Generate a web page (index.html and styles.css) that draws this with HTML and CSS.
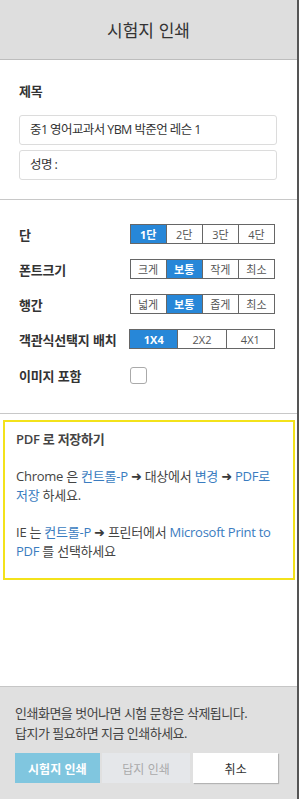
FILE: index.html
```html
<!DOCTYPE html>
<html lang="ko">
<head>
<meta charset="utf-8">
<link rel="stylesheet" href="styles.css">
</head>
<body>
<div class="panel">
  <header class="head">시험지 인쇄</header>
  <section class="sec-title">
    <div class="label">제목</div>
    <div class="input">중1 영어교과서 YBM 박준언 레슨 1</div>
    <div class="input">성명 :</div>
  </section>
  <section class="sec-opts">
    <div class="row">
      <div class="label">단</div>
      <div class="seg seg4"><span class="on">1단</span><span>2단</span><span>3단</span><span>4단</span></div>
    </div>
    <div class="row">
      <div class="label">폰트크기</div>
      <div class="seg seg4"><span>크게</span><span class="on">보통</span><span>작게</span><span>최소</span></div>
    </div>
    <div class="row">
      <div class="label">행간</div>
      <div class="seg seg4"><span>넓게</span><span class="on">보통</span><span>좁게</span><span>최소</span></div>
    </div>
    <div class="row">
      <div class="label">객관식선택지 배치</div>
      <div class="seg seg3"><span class="on">1X4</span><span>2X2</span><span>4X1</span></div>
    </div>
    <div class="row row-check">
      <div class="label">이미지 포함</div>
      <div class="check"></div>
    </div>
  </section>
  <section class="pdf">
    <div class="pdf-title">PDF 로 저장하기</div>
    <p>Chrome 은 <span class="hl">컨트롤-P</span> <span class="arr">➜</span> 대상에서 <span class="hl">변경</span> <span class="arr">➜</span> <span class="hl">PDF로 저장</span> 하세요.</p>
    <p>IE 는 <span class="hl">컨트롤-P</span> <span class="arr">➜</span> 프린터에서 <span class="hl">Microsoft Print to PDF</span> 를 선택하세요</p>
  </section>
  <div class="spacer"></div>
  <footer class="foot">
    <p class="note">인쇄화면을 벗어나면 시험 문항은 삭제됩니다.<br>답지가 필요하면 지금 인쇄하세요.</p>
    <div class="btns">
      <button class="btn btn-print">시험지 인쇄</button>
      <button class="btn btn-ans">답지 인쇄</button>
      <button class="btn btn-cancel">취소</button>
    </div>
  </footer>
</div>
</body>
</html>
```
FILE: styles.css
```css
* { box-sizing: border-box; }
html, body { margin: 0; padding: 0; }
body {
  font-family: "Open Sans", "Noto Sans CJK KR", sans-serif;
  color: #333;
  background: #fff;
}
.panel {
  width: 299px;
  height: 799px;
  border-right: 2px solid #555;
  display: flex;
  flex-direction: column;
  background: #fff;
}
.head {
  height: 60px;
  flex: none;
  background: #dedede;
  border-bottom: 1px solid #bdbdbd;
  display: flex;
  align-items: center;
  justify-content: center;
  font-size: 17px;
  color: #333;
  font-family: "Noto Sans CJK KR", sans-serif;
}
.label {
  font-family: "Noto Sans CJK KR", sans-serif;
  font-weight: 700;
  font-size: 13px;
  color: #333;
  letter-spacing: -0.2px;
}
.sec-title {
  flex: none;
  padding: 21px 20px 19px 19px;
  border-bottom: 1px solid #c8c8c8;
}
.sec-title .label { margin-bottom: 15px; line-height: 19px; }
.input {
  height: 30px;
  border: 1px solid #dcdcdc;
  border-radius: 3px;
  padding: 0 10px;
  margin-bottom: 5px;
  font-size: 12.5px;
  letter-spacing: -0.6px;
  line-height: 28px;
  color: #333;
}
.input:last-child { margin-bottom: 0; }
.sec-opts {
  flex: none;
  padding: 24px 22px 29px 19px;
  border-bottom: 1px solid #c8c8c8;
  display: flex;
  flex-direction: column;
  gap: 15px;
}
.row {
  display: flex;
  align-items: center;
  height: 20px;
}
.row .label { width: 111px; }
.seg {
  display: flex;
  border: 1px solid #666;
  height: 20px;
}
.seg4 { width: 146px; }
.seg3 { width: 147px; }
.seg span {
  flex: 1;
  display: flex;
  align-items: center;
  justify-content: center;
  font-size: 11px;
  color: #555;
  border-left: 1px solid #666;
  font-family: "Open Sans", "Noto Sans CJK KR", sans-serif;
}
.seg span:first-child { border-left: none; }
.seg span.on {
  background: #2787d8;
  color: #fff;
  font-weight: 700;
}
.row-check { height: 17px; margin-top: 3px; }
.check {
  width: 17px;
  height: 17px;
  border: 1px solid #aaa;
  border-radius: 3px;
  background: #fff;
}
.pdf {
  flex: none;
  margin: 6px 2px 0 3px;
  border: 2px solid #f3e21b;
  padding: 9px 10px 10px 11px;
  font-size: 13px;
  line-height: 19px;
  letter-spacing: -0.25px;
  color: #444;
  height: 160px;
}
.pdf-title {
  font-weight: 600;
  color: #444;
  line-height: 17px;
  margin-bottom: 19px;
}
.pdf p { margin: 0 0 18px 0; }
.pdf p:last-child { margin-bottom: 0; }
.hl { color: #3a7cc0; }
.arr { font-family: "DejaVu Sans", sans-serif; font-size: 13px; line-height: 1; color: #3a3a3a; }
.spacer { flex: 1; }
.foot {
  flex: none;
  background: #e0e0e0;
  border-top: 1px solid #c6c6c6;
  height: 113px;
  padding: 16px 19px 0 15px;
}
.note {
  margin: 0 0 10px 0;
  font-size: 13px;
  line-height: 20px;
  letter-spacing: -0.5px;
  color: #444;
}
.btns {
  display: flex;
  gap: 2px;
}
.btn {
  height: 30px;
  border: none;
  font-family: "Noto Sans CJK KR", sans-serif;
  font-size: 12px;
  padding: 0;
}
.btn-print {
  width: 85px;
  background: #80c6df;
  color: #fff;
  font-weight: 700;
}
.btn-ans {
  width: 89px;
  background: #e5e7ea;
  color: #aaa;
}
.btn-cancel {
  width: 85px;
  margin-left: 1px;
  background: #fff;
  color: #333;
  box-shadow: 1px 1px 1px rgba(0,0,0,0.2);
}
```
